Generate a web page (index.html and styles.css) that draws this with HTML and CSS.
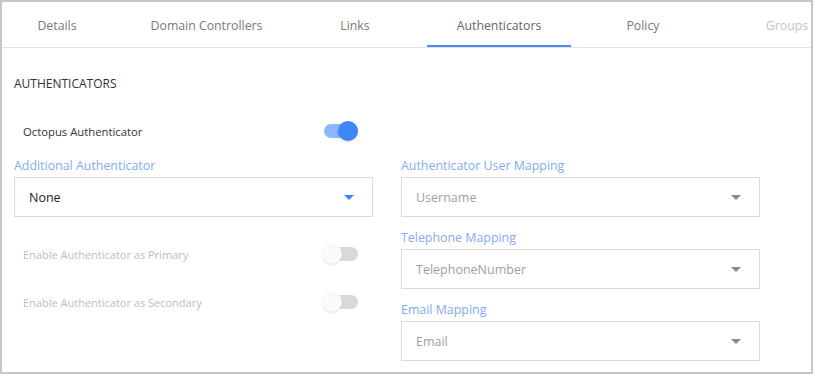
FILE: index.html
```html
<!DOCTYPE html>
<html lang="en">
  <head>
    <meta charset="UTF-8" />
    <meta name="viewport" content="width=device-width, initial-scale=1.0" />
    <title>Directory - Authenticators</title>
    <link rel="stylesheet" href="styles.css">
  </head>
  <body>
    <div class="panel">
      <div class="tabs">
        <div class="tab tab-details">Details</div>
        <div class="tab tab-controllers">Domain Controllers</div>
        <div class="tab">Links</div>
        <div class="tab active">Authenticators</div>
        <div class="tab">Policy</div>
        <div class="tab disabled">Groups</div>
      </div>

      <div class="content">
        <h2 class="section-title">AUTHENTICATORS</h2>

        <div class="switch-row main-switch">
          <span class="switch-label">Octopus Authenticator</span>
          <span class="switch on"><span class="thumb"></span></span>
        </div>

        <div class="columns">
          <div class="column">
            <div class="field">
              <label class="field-label">Additional Authenticator</label>
              <div class="select active-select">
                <span class="value">None</span>
                <span class="caret"></span>
              </div>
            </div>

            <div class="switch-list">
              <div class="switch-row muted">
                <span class="switch-label">Enable Authenticator as Primary</span>
                <span class="switch off"><span class="thumb"></span></span>
              </div>
              <div class="switch-row muted">
                <span class="switch-label">Enable Authenticator as Secondary</span>
                <span class="switch off"><span class="thumb"></span></span>
              </div>
            </div>
          </div>

          <div class="column">
            <div class="field">
              <label class="field-label">Authenticator User Mapping</label>
              <div class="select">
                <span class="value">Username</span>
                <span class="caret"></span>
              </div>
            </div>
            <div class="field">
              <label class="field-label">Telephone Mapping</label>
              <div class="select">
                <span class="value">TelephoneNumber</span>
                <span class="caret"></span>
              </div>
            </div>
            <div class="field">
              <label class="field-label">Email Mapping</label>
              <div class="select">
                <span class="value">Email</span>
                <span class="caret"></span>
              </div>
            </div>
          </div>
        </div>
      </div>
    </div>
  </body>
</html>
```

FILE: styles.css
```css
* {
  box-sizing: border-box;
}

body {
  margin: 0;
  font-family: "Open Sans", sans-serif;
  background-color: white;
  color: #333;
}

.panel {
  width: 813px;
  height: 374px;
  border: 2px solid #c6c6c6;
  overflow: hidden;
}

/* Tab strip */
.tabs {
  display: flex;
  height: 46px;
  border-bottom: 1px solid #e2e2e2;
  white-space: nowrap;
}

.tab {
  flex: none;
  width: 144px;
  padding-top: 3px;
  text-align: center;
  font-size: 12.3px;
  line-height: 42px;
  color: #7a7a7a;
}

.tab-details {
  width: 110px;
}

.tab-controllers {
  width: 171px;
  padding-left: 18px;
}

.tab.active {
  color: #666;
  box-shadow: inset 0 -2px 0 #4a8af4;
}

.tab.disabled {
  color: #c4c4c4;
}

/* Body */
.content {
  padding: 26px 12px 0;
}

.section-title {
  margin: 0;
  font-size: 12px;
  font-weight: normal;
  line-height: 20px;
  color: #333;
}

.switch-row {
  display: flex;
  align-items: center;
  justify-content: space-between;
  width: 344px;
  height: 48px;
  padding-left: 9px;
}

.main-switch {
  height: 32px;
  margin-top: 21px;
  margin-bottom: 9px;
}

.switch-label {
  font-size: 11.3px;
  color: #333;
}

.muted .switch-label {
  font-size: 11px;
  color: #bdbdbd;
}

.switch {
  position: relative;
  width: 34px;
  height: 14px;
  border-radius: 7px;
}

.switch .thumb {
  position: absolute;
  top: -3px;
  width: 20px;
  height: 20px;
  border-radius: 50%;
}

.switch.on {
  background-color: #8db5fa;
}

.switch.on .thumb {
  right: 0;
  background-color: #3f87f5;
  box-shadow: 0 1px 2px rgba(0, 0, 0, 0.15);
}

.switch.off {
  background-color: #d9d9d9;
}

.switch.off .thumb {
  left: -2px;
  background-color: #fafafa;
  box-shadow: 0 1px 2px rgba(0, 0, 0, 0.12);
}

.columns {
  display: grid;
  grid-template-columns: 359px 359px;
  column-gap: 28px;
}

.column {
  display: flex;
  flex-direction: column;
  gap: 11px;
}

.field {
  display: flex;
  flex-direction: column;
}

.field-label {
  font-size: 12.4px;
  line-height: 20px;
  margin-bottom: 1px;
  color: #85abf5;
}

.select {
  display: flex;
  align-items: center;
  justify-content: space-between;
  height: 40px;
  padding: 1px 18px 0 14px;
  border: 1px solid #dcdcdc;
  font-size: 12.5px;
  color: #a0a0a0;
}

.active-select {
  color: #222;
}

.caret {
  width: 0;
  height: 0;
  border-left: 5px solid transparent;
  border-right: 5px solid transparent;
  border-top: 5px solid #8c8c8c;
}

.active-select .caret {
  border-top-color: #3f87f5;
}

.switch-list {
  margin-top: 2px;
}
```
